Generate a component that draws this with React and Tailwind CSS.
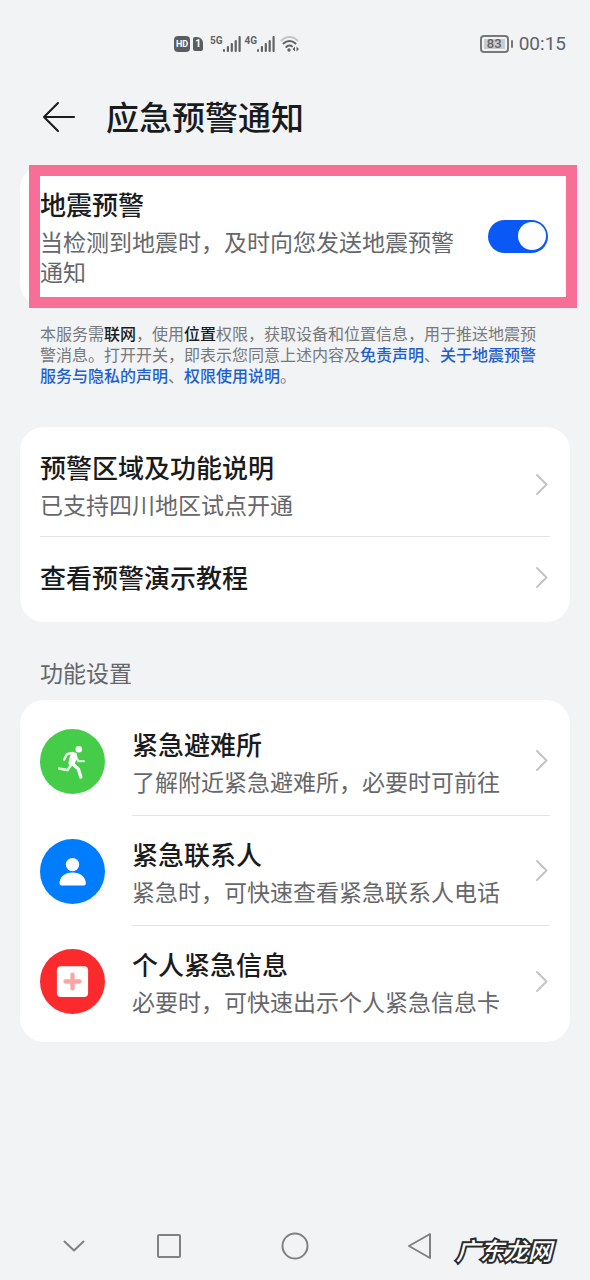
import React from 'react'

const Signal = ({label}) => {
  return (
    <div className="flex items-start">
      <span className="text-[10px] leading-3 font-bold font-['Liberation_Sans_Narrow','Roboto',sans-serif]">{label}</span>
      <svg className="h-[18px] w-[18px]" viewBox="0 0 18 18" fill="currentColor" aria-hidden="true">
        <rect x="0" y="14" width="2" height="3" rx="1" />
        <rect x="3.800" y="11" width="2.200" height="6" rx="1" />
        <rect x="7.700" y="8" width="2.200" height="9" rx="1" />
        <rect x="11.600" y="5" width="2.200" height="12" rx="1" />
        <rect x="15.500" y="1" width="2.200" height="16" rx="1" />
      </svg>
    </div>
  )
}

const StatusBar = () => {
  return (
    <div className="h-[88px] flex items-center justify-between pl-[174px] pr-6 text-[#626366] font-['Roboto',sans-serif]">
      <div className="flex items-center">
        <span className="bg-[#5c5d60] text-white rounded-sm h-4 w-4 text-[9px] leading-4 font-bold text-center">HD</span>
        <span className="bg-[#5c5d60] text-white rounded-xs rounded-tr-md h-3.5 w-2.5 ml-[3px] text-[10px] leading-3.5 font-bold text-center">1</span>
        <div className="flex ml-[7px] gap-1">
          <Signal label="5G" />
          <Signal label="4G" />
        </div>
        <svg className="h-[18px] w-5 ml-[5px]" viewBox="0 0 20 18" fill="none" stroke="currentColor" strokeWidth="2" strokeLinecap="round" aria-hidden="true">
          <path d="M1.500 5.500C6 .8 13 .8 17.500 5.500" stroke="#c3c4c6" />
          <path d="M3.500 8.500C7 5 12 5 15.500 8.500" />
          <path d="M6.300 12C8 10 10.500 10 12 11.300" />
          <circle cx="9" cy="15" r="1.700" fill="currentColor" stroke="none" />
          <path d="M15 11.500v5l-2.500-2.500zM16.500 11.500v5l2.500-2.500z" fill="currentColor" stroke="none" />
        </svg>
      </div>
      <div className="flex items-center">
        <div className="h-[18px] w-[29px] p-0.5 rounded-sm border-2 border-[#77787a]">
          <div className="h-full bg-[#cbccce] flex items-center justify-center text-[13px] font-medium">83</div>
        </div>
        <div className="h-2 w-0.5 ml-0.5 rounded-sm bg-[#77787a]"></div>
        <span className="ml-1.5 text-[19px]">00:15</span>
      </div>
    </div>
  )
}

const Chevron = () => {
  return (
    <svg className="h-[23px] w-[13px] mr-0.5 shrink-0" viewBox="0 0 13 23" fill="none" stroke="#c3c4c6" strokeWidth="2" strokeLinecap="round" strokeLinejoin="round" aria-hidden="true">
      <path d="M2 2l9.500 9.500L2 21" />
    </svg>
  )
}

const RowText = ({title, text}) => {
  return (
    <div className="flex flex-col gap-1 flex-1 min-w-0">
      <div className="text-[26px] leading-9 font-medium text-[#1a1b1c]">{title}</div>
      {text && <div className="text-[23px] leading-[30px] text-[#66676a]">{text}</div>}
    </div>
  )
}

const RunIcon = () => (
  <svg className="h-full w-full" viewBox="59 56 196 196" fill="none" stroke="white" strokeLinecap="round" strokeLinejoin="round" aria-hidden="true">
    <g opacity="0.8">
      <path d="M168 142l7 11 16 0" strokeWidth="7" />
      <path d="M152 165l-10 15-25-5" strokeWidth="8" />
    </g>
    <circle cx="176" cy="117" r="10" fill="white" stroke="none" />
    <path d="M157 128l-17 4-8 16" strokeWidth="7" />
    <path d="M156 128l11 2 2 11-8 20-11 4-3-7 4-16z" fill="white" strokeWidth="5" />
    <path d="M157 161l18 16 7 24" strokeWidth="10" />
  </svg>
)

const ContactIcon = () => (
  <svg className="h-full w-full" viewBox="59 387 196 196" fill="white" aria-hidden="true">
    <circle cx="157" cy="464" r="20" />
    <path d="M118 521c0-20 16-33 39-33s40 13 40 33q0 6-6 6h-67q-6 0-6-6z" />
  </svg>
)

const MedicalIcon = () => (
  <svg className="h-full w-full" viewBox="59 716 196 196" fill="white" aria-hidden="true">
    <rect x="110" y="768" width="94" height="93" rx="12" />
    <path d="M157 793v42M136 814h42" stroke="#fba5a5" strokeWidth="13" strokeLinecap="round" />
  </svg>
)

const settings = [
  {title: '紧急避难所', text: '了解附近紧急避难所，必要时可前往', icon: <RunIcon />, color: 'bg-[#45cc49]'},
  {title: '紧急联系人', text: '紧急时，可快速查看紧急联系人电话', icon: <ContactIcon />, color: 'bg-[#007dff]'},
  {title: '个人紧急信息', text: '必要时，可快速出示个人紧急信息卡', icon: <MedicalIcon />, color: 'bg-[#fa2a2d]'},
]

const NavBar = () => {
  return (
    <nav className="relative mt-auto h-[68px] flex items-center text-[#808184]">
      <div className="flex-1 flex justify-end">
        <button aria-label="收起" className="mr-5">
          <svg className="h-6 w-6" viewBox="0 0 24 24" fill="none" stroke="currentColor" strokeWidth="2" strokeLinecap="round" strokeLinejoin="round"><path d="M2.500 7.500l9.500 9 9.500-9" /></svg>
        </button>
      </div>
      <button aria-label="最近任务" className="w-[126px] flex justify-center">
        <svg className="h-7 w-7" viewBox="0 0 28 28" fill="none" stroke="currentColor" strokeWidth="2"><rect x="3" y="3" width="22" height="22" rx="1" /></svg>
      </button>
      <button aria-label="主页" className="w-[126px] flex justify-center">
        <svg className="h-7 w-7" viewBox="0 0 28 28" fill="none" stroke="currentColor" strokeWidth="2"><circle cx="14" cy="14" r="12.500" /></svg>
      </button>
      <button aria-label="返回" className="w-[126px] flex justify-center">
        <svg className="h-7 w-7" viewBox="0 0 28 28" fill="none" stroke="currentColor" strokeWidth="2" strokeLinejoin="round"><path d="M23 2v24L2 14z" /></svg>
      </button>
      <div className="flex-1"></div>
      <div className="absolute right-[38px] bottom-4 text-2xl leading-7 font-medium italic text-white [-webkit-text-stroke:4px_#2b2b2b] [paint-order:stroke_fill]">广东龙网</div>
    </nav>
  )
}

const App = () => {
  return (
    <div className="min-h-screen w-full flex flex-col bg-[#f1f3f5] font-['Noto_Sans_CJK_SC',sans-serif]">
      <StatusBar />
      <header className="h-[62px] px-10 flex items-center gap-7">
        <button aria-label="返回上一页">
          <svg className="h-[38px] w-[38px]" viewBox="0 0 38 38" fill="none" stroke="#1a1b1c" strokeWidth="2" strokeLinecap="round" strokeLinejoin="round">
            <path d="M34 17H4M18 3L4 17l14 14" />
          </svg>
        </button>
        <h1 className="text-[33px] leading-10 font-medium text-[#1a1b1c] font-['Liberation_Sans','Noto_Sans_CJK_SC',sans-serif]">应急预警通知</h1>
      </header>

      <main className="px-5 pt-[15px]">
        <section className="relative bg-white rounded-3xl px-5 py-[21px]">
          <label className="flex items-center gap-8">
            <RowText title="地震预警" text="当检测到地震时，及时向您发送地震预警通知" />
            <input
              type="checkbox"
              role="switch"
              defaultChecked
              className="appearance-none shrink-0 mr-0.5 h-[33px] w-[60px] p-0.5 rounded-full bg-gray-300 checked:bg-[#0a59f7] flex items-center checked:justify-end before:block before:h-7 before:w-7 before:rounded-full before:bg-white"
            />
          </label>
          <div className="absolute top-0 -bottom-px left-[9px] -right-[7px] border-[11px] border-[#f76f96] pointer-events-none"></div>
        </section>

        <p className="mt-[17px] mb-10 px-5 text-base leading-[21px] text-[#77787b] font-['Liberation_Sans','Noto_Sans_CJK_SC',sans-serif]">
          本服务需<b className="font-medium text-[#1a1b1c]">联网</b>，使用<b className="font-medium text-[#1a1b1c]">位置</b>权限，获取设备和位置信息，用于推送地震预警消息。打开开关，即表示您同意上述内容及<a href="#disclaimer" className="font-medium text-[#1f5fd0]">免责声明</a>、<a href="#privacy" className="font-medium text-[#1f5fd0]">关于地震预警服务与隐私的声明</a>、<a href="#permission" className="font-medium text-[#1f5fd0]">权限使用说明</a>。
        </p>

        <section className="bg-white rounded-3xl px-5 py-[5px]">
          <a href="#area" className="h-[105px] flex items-center border-b border-[#e3e4e6]">
            <RowText title="预警区域及功能说明" text="已支持四川地区试点开通" />
            <Chevron />
          </a>
          <a href="#demo" className="h-20 flex items-center">
            <RowText title="查看预警演示教程" />
            <Chevron />
          </a>
        </section>

        <h2 className="mt-[35px] mb-[13px] px-5 text-[23px] leading-[30px] text-[#66676a]">功能设置</h2>

        <section className="bg-white rounded-3xl px-5 py-1.5">
          {settings.map((item, i) => (
            <a key={item.title} href={`#setting-${i}`} className="group flex items-center gap-[27px]">
              <div className={`h-[65px] w-[65px] shrink-0 rounded-full ${item.color}`}>{item.icon}</div>
              <div className="h-[110px] flex flex-1 min-w-0 items-center border-b border-[#e3e4e6] group-last:border-b-0">
                <RowText title={item.title} text={item.text} />
                <Chevron />
              </div>
            </a>
          ))}
        </section>
      </main>

      <NavBar />
    </div>
  )
}

export default App
